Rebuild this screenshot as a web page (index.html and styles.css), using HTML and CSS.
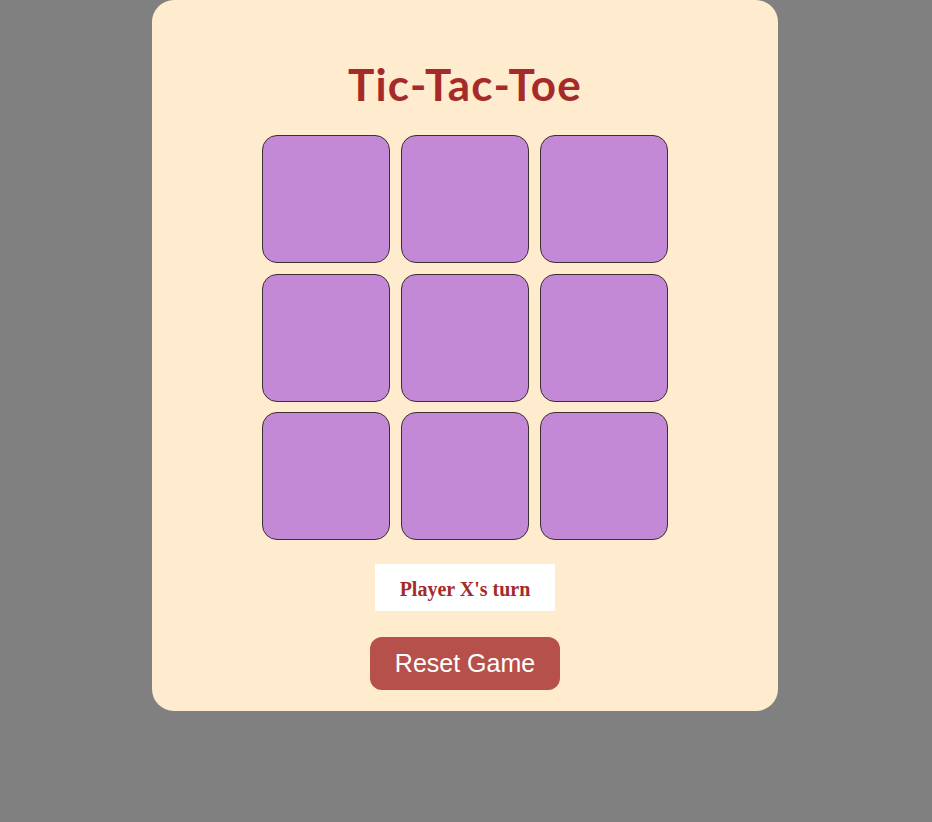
FILE: index.html
```html
<!DOCTYPE html>
<html>
<head>
<meta charset="utf-8">
<link rel="stylesheet" href="styles.css">
</head>
<body>
<div class="game">
  <h1 class="title">Tic-Tac-Toe</h1>
  <div class="board">
    <div class="cell"></div><div class="cell"></div><div class="cell"></div>
    <div class="cell"></div><div class="cell"></div><div class="cell"></div>
    <div class="cell"></div><div class="cell"></div><div class="cell"></div>
  </div>
  <div class="status">Player X's turn</div>
  <button class="reset">Reset Game</button>
</div>
</body>
</html>
```
FILE: styles.css
```css
html, body { margin: 0; padding: 0; }
body {
  background: #808080;
  height: 822px;
  padding-right: 2px;
}
.game {
  width: 626px;
  height: 711px;
  box-sizing: border-box;
  margin: 0 auto;
  background: #ffebcd;
  border-radius: 22px;
  display: flex;
  flex-direction: column;
  align-items: center;
  padding-top: 59px;
}
.title {
  margin: 0;
  font-family: Lato, sans-serif;
  font-weight: bold;
  font-size: 44px;
  letter-spacing: 1.2px;
  line-height: 50px;
  color: #a52a2a;
  height: 50px;
}
.board {
  margin-top: 26px;
  display: grid;
  grid-template-columns: repeat(3, 128px);
  grid-template-rows: repeat(3, 128px);
  column-gap: 11px;
  row-gap: 10.5px;
}
.cell {
  box-sizing: border-box;
  background: #c389d6;
  border: 1px solid #3a3030;
  border-radius: 15px;
}
.status {
  margin-top: 24px;
  width: 180px;
  height: 47px;
  box-sizing: border-box;
  padding-top: 3px;
  background: #ffffff;
  display: flex;
  align-items: center;
  justify-content: center;
  font-family: "Liberation Serif", serif;
  font-weight: bold;
  font-size: 20px;
  color: #a52a2a;
}
.reset {
  margin-top: 26px;
  width: 190px;
  height: 53px;
  border: none;
  border-radius: 12px;
  background: #b5504b;
  color: #ffffff;
  font-family: "Liberation Sans", Arial, sans-serif;
  font-size: 25px;
  padding: 0;
}
```
